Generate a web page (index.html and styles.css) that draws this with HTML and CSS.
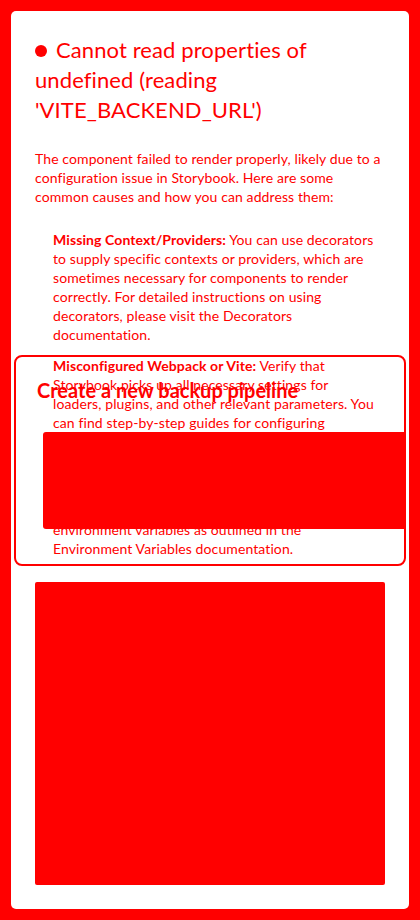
FILE: index.html
```html
<!DOCTYPE html>
<html lang="en">
<head>
<meta charset="utf-8">
<title>Storybook error</title>
<link rel="stylesheet" href="styles.css">
</head>
<body>
<div class="wrapper">
  <div class="main">
    <h1 class="error-title">Cannot read properties of undefined (reading 'VITE_BACKEND_URL')</h1>
    <p class="intro">The component failed to render properly, likely due to a configuration issue in Storybook. Here are some common causes and how you can address them:</p>
    <ol class="causes">
      <li><strong>Missing Context/Providers:</strong> You can use decorators to supply specific contexts or providers, which are sometimes necessary for components to render correctly. For detailed instructions on using decorators, please visit the <a href="#">Decorators documentation</a>.</li>
      <li><strong>Misconfigured Webpack or Vite:</strong> Verify that<br>Storybook picks up all necessary settings for<br>loaders, plugins, and other relevant parameters. You<br>can find step-by-step guides for configuring<br><a href="#">Webpack</a> or <a href="#">Vite</a> with Storybook.</li>
      <li><strong>Missing Environment Variables:</strong> Your Storybook<br>may require specific environment variables to<br>function as intended. You can set up custom<br>environment variables as outlined in the<br><a href="#">Environment Variables documentation</a>.</li>
    </ol>
    <pre class="stack"><code></code></pre>
  </div>
  <div class="overlay-card">
    <h2 class="overlay-title">Create a new backup pipeline</h2>
    <div class="overlay-block"></div>
  </div>
</div>
</body>
</html>
```
FILE: styles.css
```css
* { box-sizing: border-box; }
html, body { margin: 0; padding: 0; }
body {
  background: #ff0000;
  font-family: Lato, "Noto Sans", sans-serif;
  color: #ff0000;
}
.wrapper {
  position: relative;
  padding: 11px;
  min-height: 920px;
}
.main {
  background: #ffffff;
  border-radius: 5px;
  padding: 24px;
  min-height: 898px;
  display: flex;
  flex-direction: column;
  gap: 24px;
}
.error-title {
  margin: 0;
  font-size: 22px;
  font-weight: 400;
  line-height: 30px;
  letter-spacing: 0.1px;
}
.error-title::before {
  content: "";
  display: inline-block;
  width: 12px;
  height: 12px;
  border-radius: 50%;
  background: #ff0000;
  margin-right: 9px;
  vertical-align: 1px;
}
.intro {
  margin: 0;
  font-size: 14px;
  line-height: 19px;
  letter-spacing: 0.1px;
}
.causes {
  margin: 0;
  padding-left: 18px;
  list-style: none;
  font-size: 14px;
  line-height: 19px;
  letter-spacing: 0.1px;
}
.causes li + li { margin-top: 12px; }
.causes strong { font-weight: 700; }
.causes a { color: inherit; text-decoration: none; }
.stack {
  flex: 1;
  margin: 0;
  border-radius: 2px;
  background: #ff0000;
}
.overlay-card {
  position: absolute;
  left: 14px;
  top: 355px;
  width: 392px;
  height: 211px;
  border: 2px solid #ff0000;
  border-radius: 8px;
  padding: 20px 0 0 21px;
}
.overlay-title {
  margin: 0;
  font-size: 20px;
  font-weight: 700;
  line-height: 26px;
}
.overlay-block {
  margin: 29px 0 0 6px;
  width: 361px;
  height: 97px;
  background: #ff0000;
  border-radius: 3px 0 0 3px;
}
```
